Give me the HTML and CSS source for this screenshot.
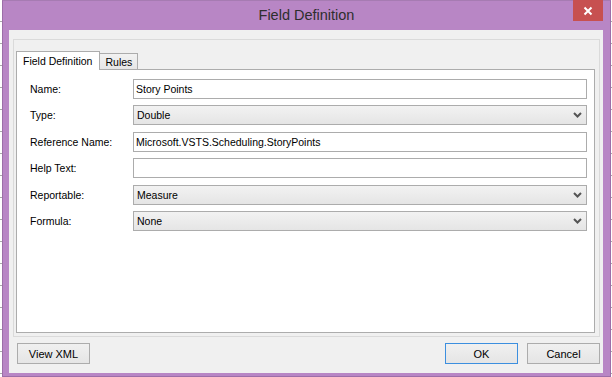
FILE: index.html
```html
<!DOCTYPE html>
<html lang="en">
<head>
    <meta charset="UTF-8">
    <title>Field Definition</title>
    <link rel="stylesheet" href="styles.css">
</head>
<body>
    <div class="window">
        <div class="titlebar">
            <span class="title">Field Definition</span>
            <div class="close">
                <svg width="10" height="10" viewBox="0 0 10 10"><path d="M1.5 1.5 L8.5 8.5 M8.5 1.5 L1.5 8.5" stroke="#fff" stroke-width="2"/></svg>
            </div>
        </div>
        <div class="client">
            <div class="panel">
                <div class="tabs">
                    <div class="tab active">Field Definition</div>
                    <div class="tab">Rules</div>
                </div>
                <div class="page">
                    <div class="row">
                        <label>Name:</label>
                        <div class="field">Story Points</div>
                    </div>
                    <div class="row">
                        <label>Type:</label>
                        <div class="field combo">
                            <span>Double</span>
                            <svg width="9" height="6" viewBox="0 0 9 6"><path d="M1 1 L4.5 4.5 L8 1" fill="none" stroke="#555" stroke-width="2"/></svg>
                        </div>
                    </div>
                    <div class="row">
                        <label>Reference Name:</label>
                        <div class="field">Microsoft.VSTS.Scheduling.StoryPoints</div>
                    </div>
                    <div class="row">
                        <label>Help Text:</label>
                        <div class="field"></div>
                    </div>
                    <div class="row">
                        <label>Reportable:</label>
                        <div class="field combo">
                            <span>Measure</span>
                            <svg width="9" height="6" viewBox="0 0 9 6"><path d="M1 1 L4.5 4.5 L8 1" fill="none" stroke="#555" stroke-width="2"/></svg>
                        </div>
                    </div>
                    <div class="row">
                        <label>Formula:</label>
                        <div class="field combo">
                            <span>None</span>
                            <svg width="9" height="6" viewBox="0 0 9 6"><path d="M1 1 L4.5 4.5 L8 1" fill="none" stroke="#555" stroke-width="2"/></svg>
                        </div>
                    </div>
                </div>
            </div>
            <div class="buttons">
                <button class="btn">View XML</button>
                <span class="spacer"></span>
                <button class="btn default">OK</button>
                <button class="btn">Cancel</button>
            </div>
        </div>
    </div>
</body>
</html>
```

FILE: styles.css
```css
body {
    margin: 0;
    padding-left: 2px;
    height: 377px;
    overflow: hidden;
    background-color: #fff;
    background-image: repeating-linear-gradient(to bottom, #fff 0, #fff 21px, #a9a9a9 21px, #a9a9a9 22px);
    font-family: "Liberation Sans", Arial, sans-serif;
    font-size: 10.5px;
    color: #000;
}
.window {
    width: 607px;
    height: 375px;
    border: 1px solid #9c6ea8;
    border-top-color: #a67bb2;
    background: #b886c5;
    display: flex;
    flex-direction: column;
}
.titlebar {
    height: 29px;
    display: flex;
    align-items: center;
    justify-content: center;
    position: relative;
}
.title {
    font-size: 14.5px;
    color: #2e2e2e;
    margin-top: -1px;
}
.close {
    position: absolute;
    top: -1px;
    right: 7px;
    width: 30px;
    height: 21px;
    background: #c75050;
    display: flex;
    align-items: center;
    justify-content: center;
}
.client {
    margin: 0 7px 3px 6px;
    flex: 1;
    background: #f0f0f0;
    display: flex;
    flex-direction: column;
    padding: 9px 3px 0 4px;
}
.panel {
    border: 1px solid #dadada;
    height: 282px;
    padding: 11px 4px 3px 2px;
    display: flex;
    flex-direction: column;
}
.tabs {
    display: flex;
    align-items: flex-end;
    height: 18px;
    position: relative;
    z-index: 1;
    white-space: nowrap;
}
.tab {
    height: 16px;
    line-height: 16px;
    padding: 0 5px;
    border: 1px solid #acacac;
    border-bottom: none;
    background: linear-gradient(#f2f2f2, #e6e6e6);
    box-sizing: border-box;
}
.tab.active {
    height: 19px;
    margin-bottom: -1px;
    padding: 0 7px 0 6px;
    line-height: 18px;
    background: #fff;
}
.tab + .tab {
    border-left: none;
}
.page {
    flex: 1;
    background: #fff;
    border: 1px solid #acacac;
    padding: 9px 7px 0 13px;
}
.row {
    display: flex;
    align-items: center;
    height: 20px;
    margin-bottom: 6.4px;
}
.row label {
    width: 103px;
}
.field {
    flex: 1;
    height: 20px;
    box-sizing: border-box;
    border: 1px solid #acacac;
    background: #fff;
    padding: 0 2px;
    line-height: 18px;
    white-space: nowrap;
}
.combo {
    display: flex;
    align-items: center;
    justify-content: space-between;
    padding: 0 4px 0 3px;
    background: linear-gradient(#f2f2f2, #e5e5e5);
}
.buttons {
    display: flex;
    margin-top: 6px;
    padding-left: 4px;
    gap: 9px;
}
.spacer {
    flex: 1;
}
.btn {
    width: 73px;
    height: 21px;
    border: 1px solid #acacac;
    background: linear-gradient(#f0f0f0, #e5e5e5);
    font-family: "Liberation Sans", Arial, sans-serif;
    font-size: 11px;
    color: #000;
    padding: 0;
}
.btn.default {
    border-color: #3c8fdf;
}
```
